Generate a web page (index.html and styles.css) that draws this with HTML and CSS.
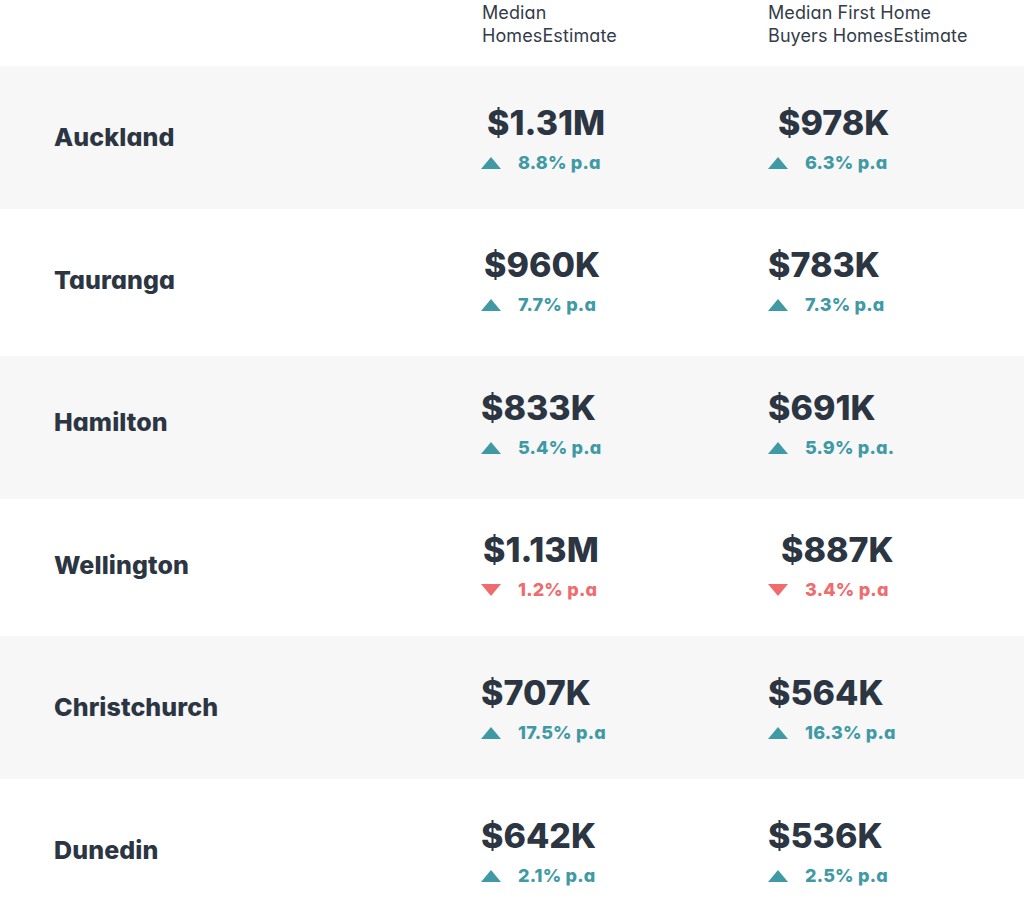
FILE: index.html
```html
<!DOCTYPE html>
<html lang="en">
<head>
<meta charset="utf-8">
<title>Median Home Estimates</title>
<link rel="stylesheet" href="styles.css">
</head>
<body>
<div class="table">
  <div class="head">
    <div class="head-spacer"></div>
    <div class="head-label">Median<br>HomesEstimate</div>
    <div class="head-label">Median First Home<br>Buyers HomesEstimate</div>
  </div>

  <div class="row shade">
    <div class="city">Auckland</div>
    <div class="cell"><div class="value shift-6">$1.31M</div><div class="change up"><span class="tri"></span>8.8% p.a</div></div>
    <div class="cell"><div class="value shift-10">$978K</div><div class="change up"><span class="tri"></span>6.3% p.a</div></div>
  </div>

  <div class="row tall">
    <div class="city">Tauranga</div>
    <div class="cell"><div class="value shift-3">$960K</div><div class="change up"><span class="tri"></span>7.7% p.a</div></div>
    <div class="cell"><div class="value">$783K</div><div class="change up"><span class="tri"></span>7.3% p.a</div></div>
  </div>

  <div class="row shade lowered">
    <div class="city">Hamilton</div>
    <div class="cell"><div class="value">$833K</div><div class="change up"><span class="tri"></span>5.4% p.a</div></div>
    <div class="cell"><div class="value">$691K</div><div class="change up"><span class="tri"></span>5.9% p.a.</div></div>
  </div>

  <div class="row short">
    <div class="city">Wellington</div>
    <div class="cell"><div class="value shift-2">$1.13M</div><div class="change down"><span class="tri"></span>1.2% p.a</div></div>
    <div class="cell"><div class="value shift-13">$887K</div><div class="change down"><span class="tri"></span>3.4% p.a</div></div>
  </div>

  <div class="row shade">
    <div class="city">Christchurch</div>
    <div class="cell"><div class="value">$707K</div><div class="change up"><span class="tri"></span>17.5% p.a</div></div>
    <div class="cell"><div class="value">$564K</div><div class="change up"><span class="tri"></span>16.3% p.a</div></div>
  </div>

  <div class="row">
    <div class="city">Dunedin</div>
    <div class="cell"><div class="value">$642K</div><div class="change up"><span class="tri"></span>2.1% p.a</div></div>
    <div class="cell"><div class="value">$536K</div><div class="change up"><span class="tri"></span>2.5% p.a</div></div>
  </div>
</div>
</body>
</html>
```

FILE: styles.css
```css
* { box-sizing: border-box; }

html, body {
  margin: 0;
  padding: 0;
  background: #ffffff;
}

body {
  font-family: Inter, "Liberation Sans", sans-serif;
  font-feature-settings: "cv11" 1;
  color: #2c3542;
}

.table {
  width: 1024px;
}

.head {
  display: grid;
  grid-template-columns: 482px 286px 1fr;
  height: 66px;
}

.head-label {
  font-size: 18px;
  line-height: 23px;
  font-weight: 400;
  letter-spacing: 0.1px;
  color: #343c4a;
  padding-top: 1px;
}

.row {
  display: grid;
  grid-template-columns: 481px 287px 1fr;
  align-items: center;
  height: 143px;
  padding-top: 1px;
  background: #ffffff;
}

.row.shade { background: #f7f7f7; }
.row.tall { height: 147px; padding-bottom: 5px; }
.row.lowered { padding-bottom: 10px; }
.row.short { height: 137px; padding-bottom: 5px; }

.city {
  padding-left: 54px;
  font-size: 25px;
  line-height: 30px;
  font-weight: 800;
  letter-spacing: 0.1px;
  color: #2c3542;
  margin-top: -2px;
}

.cell {
  display: flex;
  flex-direction: column;
  gap: 9px;
}

.value {
  font-size: 34px;
  line-height: 40px;
  font-weight: 800;
  color: #2c3542;
}

.shift-2 { padding-left: 2px; }
.shift-3 { padding-left: 3px; }
.shift-6 { padding-left: 6px; }
.shift-10 { padding-left: 10px; }
.shift-13 { padding-left: 13px; }

.change {
  display: flex;
  align-items: center;
  gap: 17px;
  font-size: 18px;
  line-height: 22px;
  font-weight: 800;
  letter-spacing: 0.2px;
}

.change.up { color: #3f9aa5; }
.change.down { color: #ef6b6d; }

.tri {
  width: 0;
  height: 0;
  border-left: 10px solid transparent;
  border-right: 10px solid transparent;
}

.up .tri {
  border-bottom: 12px solid #3f9aa5;
}

.down .tri {
  border-top: 12px solid #ef6b6d;
}
```
